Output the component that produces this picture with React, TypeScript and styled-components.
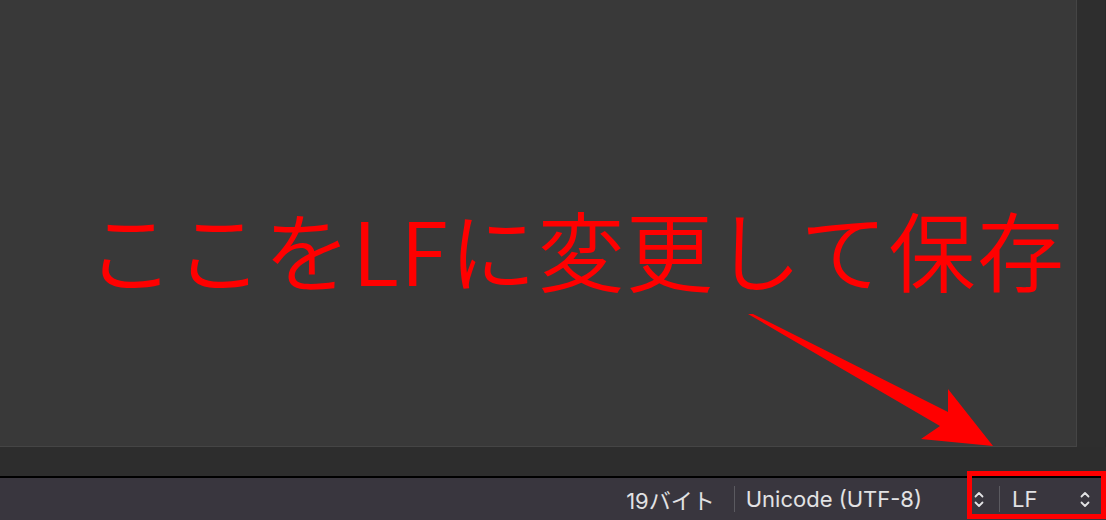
import React from "react";
import styled, { createGlobalStyle } from "styled-components";

const Global = createGlobalStyle`
  html, body { margin: 0; padding: 0; background: #2d2d2d; }
  body { font-family: "Inter", "Noto Sans CJK JP", sans-serif; }
`;

const Screen = styled.div`
  position: relative;
  width: 1106px;
  height: 520px;
  overflow: hidden;
  display: flex;
  flex-direction: column;
  background: #2d2d2d;
`;

const Workspace = styled.div`
  height: 476px;
  display: flex;
  flex-direction: column;
  background: #2d2d2d;
`;

const EditorRow = styled.div`
  height: 447px;
  display: flex;
`;

const Editor = styled.div`
  width: 1076px;
  background: #393939;
  border-right: 1px solid #454545;
  border-bottom: 1px solid #454545;
`;

const Gutter = styled.div`
  flex: 1;
  background: #2e2e2e;
  border-right: 1px solid #2a2a2a;
`;

const StatusBar = styled.div`
  flex: 1;
  border-top: 2px solid #000;
  background: #39363e;
  display: flex;
  align-items: center;
  justify-content: flex-end;
  padding-right: 16px;
  color: #e2e2e4;
  font-family: "Inter", "Noto Sans CJK JP", sans-serif;
  font-size: 22px;
`;

const Item = styled.div<{ $w?: number }>`
  display: flex;
  align-items: center;
  justify-content: space-between;
  ${(p) => (p.$w ? `width: ${p.$w}px;` : "")}
  white-space: nowrap;
`;

const Sep = styled.div<{ $ml: number; $mr: number }>`
  width: 1px;
  height: 26px;
  background: #5b5a60;
  margin-left: ${(p) => p.$ml}px;
  margin-right: ${(p) => p.$mr}px;
`;

const Highlight = styled.div`
  position: absolute;
  left: 967px;
  top: 471px;
  width: 139px;
  height: 48px;
  box-sizing: border-box;
  border: 5px solid #ff0000;
  pointer-events: none;
`;

const Note = styled.div`
  position: absolute;
  left: 87px;
  top: 205px;
  font-family: "Noto Sans CJK JP", sans-serif;
  font-weight: 350;
  font-size: 87px;
  letter-spacing: 1.4px;
  line-height: 1;
  color: #ff0000;
  white-space: nowrap;
`;

const ArrowSvg = styled.svg`
  position: absolute;
  left: 0;
  top: 0;
  pointer-events: none;
`;

const Chevrons = () => (
  <svg width="10" height="17" viewBox="0 0 10 17" fill="none" stroke="#e2e2e4" strokeWidth="1.8" strokeLinecap="round" strokeLinejoin="round">
    <path d="M1.5 5.5 L5 2 L8.5 5.5" />
    <path d="M1.5 11.5 L5 15 L8.5 11.5" />
  </svg>
);

export default function App() {
  return (
    <Screen>
      <Global />
      <Workspace>
        <EditorRow>
          <Editor />
          <Gutter />
        </EditorRow>
      </Workspace>
      <StatusBar>
        <Item>19バイト</Item>
        <Sep $ml={19} $mr={11} />
        <Item>Unicode (UTF-8)</Item>
        <Item style={{ marginLeft: 52 }}>
          <Chevrons />
        </Item>
        <Sep $ml={15} $mr={12} />
        <Item $w={78}>
          <span>LF</span>
          <Chevrons />
        </Item>
      </StatusBar>
      <Note>ここをLFに変更して保存</Note>
      <ArrowSvg width="1106" height="520" viewBox="0 0 1106 520">
        <polygon
          points="748,314 753,314 948,412 948,389 993,446 921,439 940,426"
          fill="#ff0000"
        />
      </ArrowSvg>
      <Highlight />
    </Screen>
  );
}
